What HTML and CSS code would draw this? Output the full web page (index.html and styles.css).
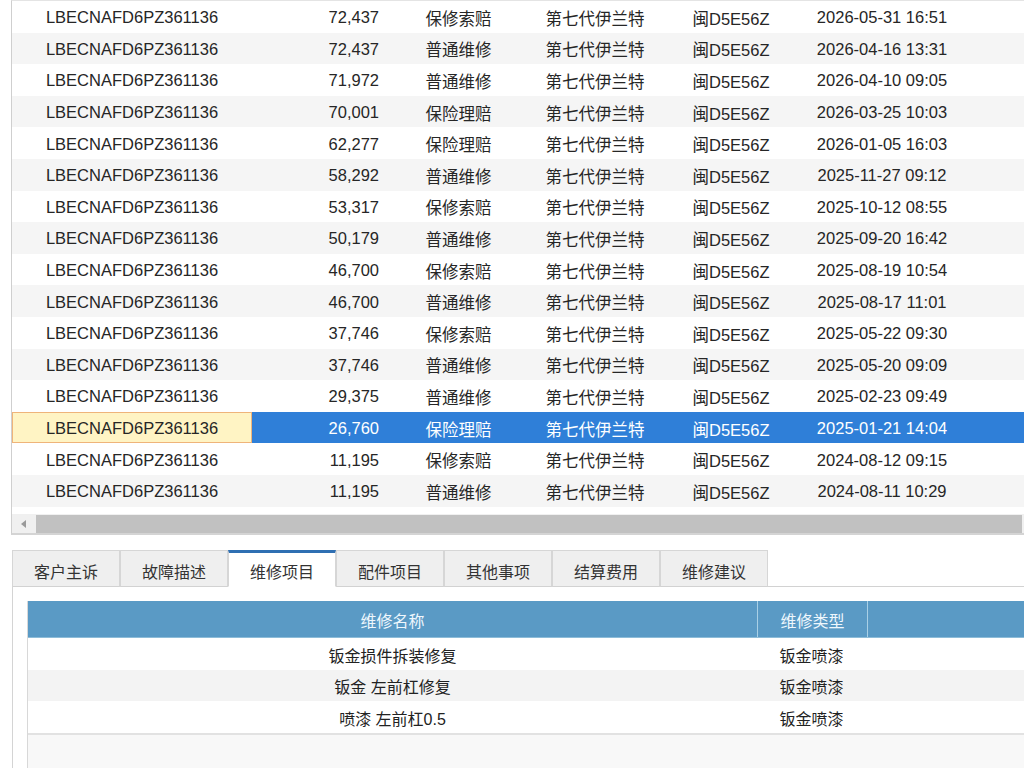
FILE: index.html
```html
<!DOCTYPE html>
<html lang="zh-CN">
<head>
    <meta charset="UTF-8">
    <title>维修记录</title>
    <link rel="stylesheet" href="styles.css">
</head>
<body>
<div class="record-grid">
    <div class="rows">
        <div class="row"><div class="cell vin">LBECNAFD6PZ361136</div><div class="cell km">72,437</div><div class="cell type">保修索赔</div><div class="cell model">第七代伊兰特</div><div class="cell plate">闽D5E56Z</div><div class="cell date">2026-05-31 16:51</div><div class="cell rest"></div></div>
        <div class="row"><div class="cell vin">LBECNAFD6PZ361136</div><div class="cell km">72,437</div><div class="cell type">普通维修</div><div class="cell model">第七代伊兰特</div><div class="cell plate">闽D5E56Z</div><div class="cell date">2026-04-16 13:31</div><div class="cell rest"></div></div>
        <div class="row"><div class="cell vin">LBECNAFD6PZ361136</div><div class="cell km">71,972</div><div class="cell type">普通维修</div><div class="cell model">第七代伊兰特</div><div class="cell plate">闽D5E56Z</div><div class="cell date">2026-04-10 09:05</div><div class="cell rest"></div></div>
        <div class="row"><div class="cell vin">LBECNAFD6PZ361136</div><div class="cell km">70,001</div><div class="cell type">保险理赔</div><div class="cell model">第七代伊兰特</div><div class="cell plate">闽D5E56Z</div><div class="cell date">2026-03-25 10:03</div><div class="cell rest"></div></div>
        <div class="row"><div class="cell vin">LBECNAFD6PZ361136</div><div class="cell km">62,277</div><div class="cell type">保险理赔</div><div class="cell model">第七代伊兰特</div><div class="cell plate">闽D5E56Z</div><div class="cell date">2026-01-05 16:03</div><div class="cell rest"></div></div>
        <div class="row"><div class="cell vin">LBECNAFD6PZ361136</div><div class="cell km">58,292</div><div class="cell type">普通维修</div><div class="cell model">第七代伊兰特</div><div class="cell plate">闽D5E56Z</div><div class="cell date">2025-11-27 09:12</div><div class="cell rest"></div></div>
        <div class="row"><div class="cell vin">LBECNAFD6PZ361136</div><div class="cell km">53,317</div><div class="cell type">保修索赔</div><div class="cell model">第七代伊兰特</div><div class="cell plate">闽D5E56Z</div><div class="cell date">2025-10-12 08:55</div><div class="cell rest"></div></div>
        <div class="row"><div class="cell vin">LBECNAFD6PZ361136</div><div class="cell km">50,179</div><div class="cell type">普通维修</div><div class="cell model">第七代伊兰特</div><div class="cell plate">闽D5E56Z</div><div class="cell date">2025-09-20 16:42</div><div class="cell rest"></div></div>
        <div class="row"><div class="cell vin">LBECNAFD6PZ361136</div><div class="cell km">46,700</div><div class="cell type">保修索赔</div><div class="cell model">第七代伊兰特</div><div class="cell plate">闽D5E56Z</div><div class="cell date">2025-08-19 10:54</div><div class="cell rest"></div></div>
        <div class="row"><div class="cell vin">LBECNAFD6PZ361136</div><div class="cell km">46,700</div><div class="cell type">普通维修</div><div class="cell model">第七代伊兰特</div><div class="cell plate">闽D5E56Z</div><div class="cell date">2025-08-17 11:01</div><div class="cell rest"></div></div>
        <div class="row"><div class="cell vin">LBECNAFD6PZ361136</div><div class="cell km">37,746</div><div class="cell type">保修索赔</div><div class="cell model">第七代伊兰特</div><div class="cell plate">闽D5E56Z</div><div class="cell date">2025-05-22 09:30</div><div class="cell rest"></div></div>
        <div class="row"><div class="cell vin">LBECNAFD6PZ361136</div><div class="cell km">37,746</div><div class="cell type">普通维修</div><div class="cell model">第七代伊兰特</div><div class="cell plate">闽D5E56Z</div><div class="cell date">2025-05-20 09:09</div><div class="cell rest"></div></div>
        <div class="row"><div class="cell vin">LBECNAFD6PZ361136</div><div class="cell km">29,375</div><div class="cell type">普通维修</div><div class="cell model">第七代伊兰特</div><div class="cell plate">闽D5E56Z</div><div class="cell date">2025-02-23 09:49</div><div class="cell rest"></div></div>
        <div class="row selected"><div class="cell vin current">LBECNAFD6PZ361136</div><div class="cell km">26,760</div><div class="cell type">保险理赔</div><div class="cell model">第七代伊兰特</div><div class="cell plate">闽D5E56Z</div><div class="cell date">2025-01-21 14:04</div><div class="cell rest"></div></div>
        <div class="row"><div class="cell vin">LBECNAFD6PZ361136</div><div class="cell km">11,195</div><div class="cell type">保修索赔</div><div class="cell model">第七代伊兰特</div><div class="cell plate">闽D5E56Z</div><div class="cell date">2024-08-12 09:15</div><div class="cell rest"></div></div>
        <div class="row"><div class="cell vin">LBECNAFD6PZ361136</div><div class="cell km">11,195</div><div class="cell type">普通维修</div><div class="cell model">第七代伊兰特</div><div class="cell plate">闽D5E56Z</div><div class="cell date">2024-08-11 10:29</div><div class="cell rest"></div></div>
    </div>

    <div class="hscroll">
        <div class="scroll-btn">
            <svg width="8" height="10" viewBox="0 0 8 10"><path d="M6 1 L1 5 L6 9 Z" fill="#9a9a9a"/></svg>
        </div>
        <div class="scroll-thumb"></div>
    </div>
</div>

<div class="detail">
    <div class="tabs">
        <div class="tab">客户主诉</div>
        <div class="tab">故障描述</div>
        <div class="tab active">维修项目</div>
        <div class="tab">配件项目</div>
        <div class="tab">其他事项</div>
        <div class="tab">结算费用</div>
        <div class="tab">维修建议</div>
        <div class="tab-fill"></div>
    </div>

    <div class="tab-panel">
        <div class="items">
            <div class="items-head">
                <div class="col name">维修名称</div>
                <div class="col kind">维修类型</div>
                <div class="col extra"></div>
            </div>
            <div class="item">
                <div class="col name">钣金损件拆装修复</div>
                <div class="col kind">钣金喷漆</div>
                <div class="col extra"></div>
            </div>
            <div class="item">
                <div class="col name">钣金 左前杠修复</div>
                <div class="col kind">钣金喷漆</div>
                <div class="col extra"></div>
            </div>
            <div class="item">
                <div class="col name">喷漆 左前杠0.5</div>
                <div class="col kind">钣金喷漆</div>
                <div class="col extra"></div>
            </div>
            <div class="items-empty"></div>
        </div>
    </div>
</div>
</body>
</html>
```

FILE: styles.css
```css
body {
    margin: 0;
    background-color: #fff;
    color: #262626;
    font-family: "Liberation Sans", "Noto Sans CJK SC", sans-serif;
    font-size: 16.5px;
    overflow: hidden;
}

/* Upper record list */
.record-grid {
    margin-left: 11px;
    border-left: 1px solid #cfcfcf;
    border-bottom: 2px solid #d4d4d4;
    border-top: 1px solid #e4e4e4;
    overflow: hidden;
    height: 535px;
    box-sizing: border-box;
}

.rows {
    width: 1100px;
}

.row {
    display: flex;
    height: 31.6px;
    align-items: center;
    background-color: #fff;
}

.row:nth-child(even) {
    background-color: #f5f5f5;
}

.row.selected {
    background-color: #2f7fd8;
    color: #fff;
}

.cell {
    height: 100%;
    display: flex;
    align-items: center;
    justify-content: center;
    white-space: nowrap;
    box-sizing: border-box;
    padding-top: 2px;
}

.vin   { width: 240px; }
.km    { width: 139px; justify-content: flex-end; padding-right: 12px; }
.type  { width: 135px; }
.model { width: 138px; }
.plate { width: 138px; padding-right: 4px; }
.date  { width: 164px; padding-right: 4px; }
.rest  { flex: 1; }

.row.selected .cell.current {
    background-color: #fff4c4;
    border: 1px solid #efb47a;
    color: #262626;
}

.hscroll {
    display: flex;
    height: 20px;
    margin-top: 7px;
    background-color: #f0f0f0;
}

.scroll-btn {
    width: 24px;
    display: flex;
    align-items: center;
    justify-content: center;
}

.scroll-thumb {
    flex: 1;
    margin: 1px 2px 1px 0;
    background-color: #c1c1c1;
}

/* Lower detail tabs */
.detail {
    margin-top: 15px;
}

.tabs {
    display: flex;
    height: 37px;
    margin-left: 12px;
}

.tab {
    width: 108px;
    box-sizing: border-box;
    display: flex;
    align-items: center;
    justify-content: center;
    font-size: 16px;
    color: #333;
    background-color: #efefef;
    border: 1px solid #d6d6d6;
    border-bottom-color: #d2d2d2;
    padding-top: 4px;
}

.tab.active {
    background-color: #fff;
    border-top: 3px solid #2f6fb2;
    border-bottom-color: #fff;
    padding-top: 2px;
}

.tab-fill {
    flex: 1;
    border-bottom: 1px solid #d2d2d2;
}

.tab-panel {
    margin-left: 12px;
    border-left: 1px solid #d4d4d4;
    padding: 14px 0 0 14px;
    height: 200px;
}

.items {
    border-left: 1px solid #d8d8d8;
    height: 100%;
    display: flex;
    flex-direction: column;
}

.items-head {
    display: flex;
    flex: none;
    height: 37px;
    background-color: #5a9ac5;
    color: #eef7fd;
    border-bottom: 1px solid #8dbcd8;
    box-sizing: border-box;
}

.items-head .col + .col {
    border-left: 1px solid #a9d0e6;
}

.col {
    display: flex;
    align-items: center;
    justify-content: center;
    white-space: nowrap;
    font-size: 16px;
    padding-top: 2px;
}

.col.name  { width: 729px; }
.col.kind  { width: 109px; }
.col.extra { flex: 1; }

.item {
    display: flex;
    flex: none;
    height: 31.5px;
    background-color: #fff;
    color: #222;
}

.item:nth-child(odd) {
    background-color: #f3f3f3;
}

.items-empty {
    flex: 1;
    background-color: #f8f8f8;
    border-top: 2px solid #e2e2e2;
}
```
